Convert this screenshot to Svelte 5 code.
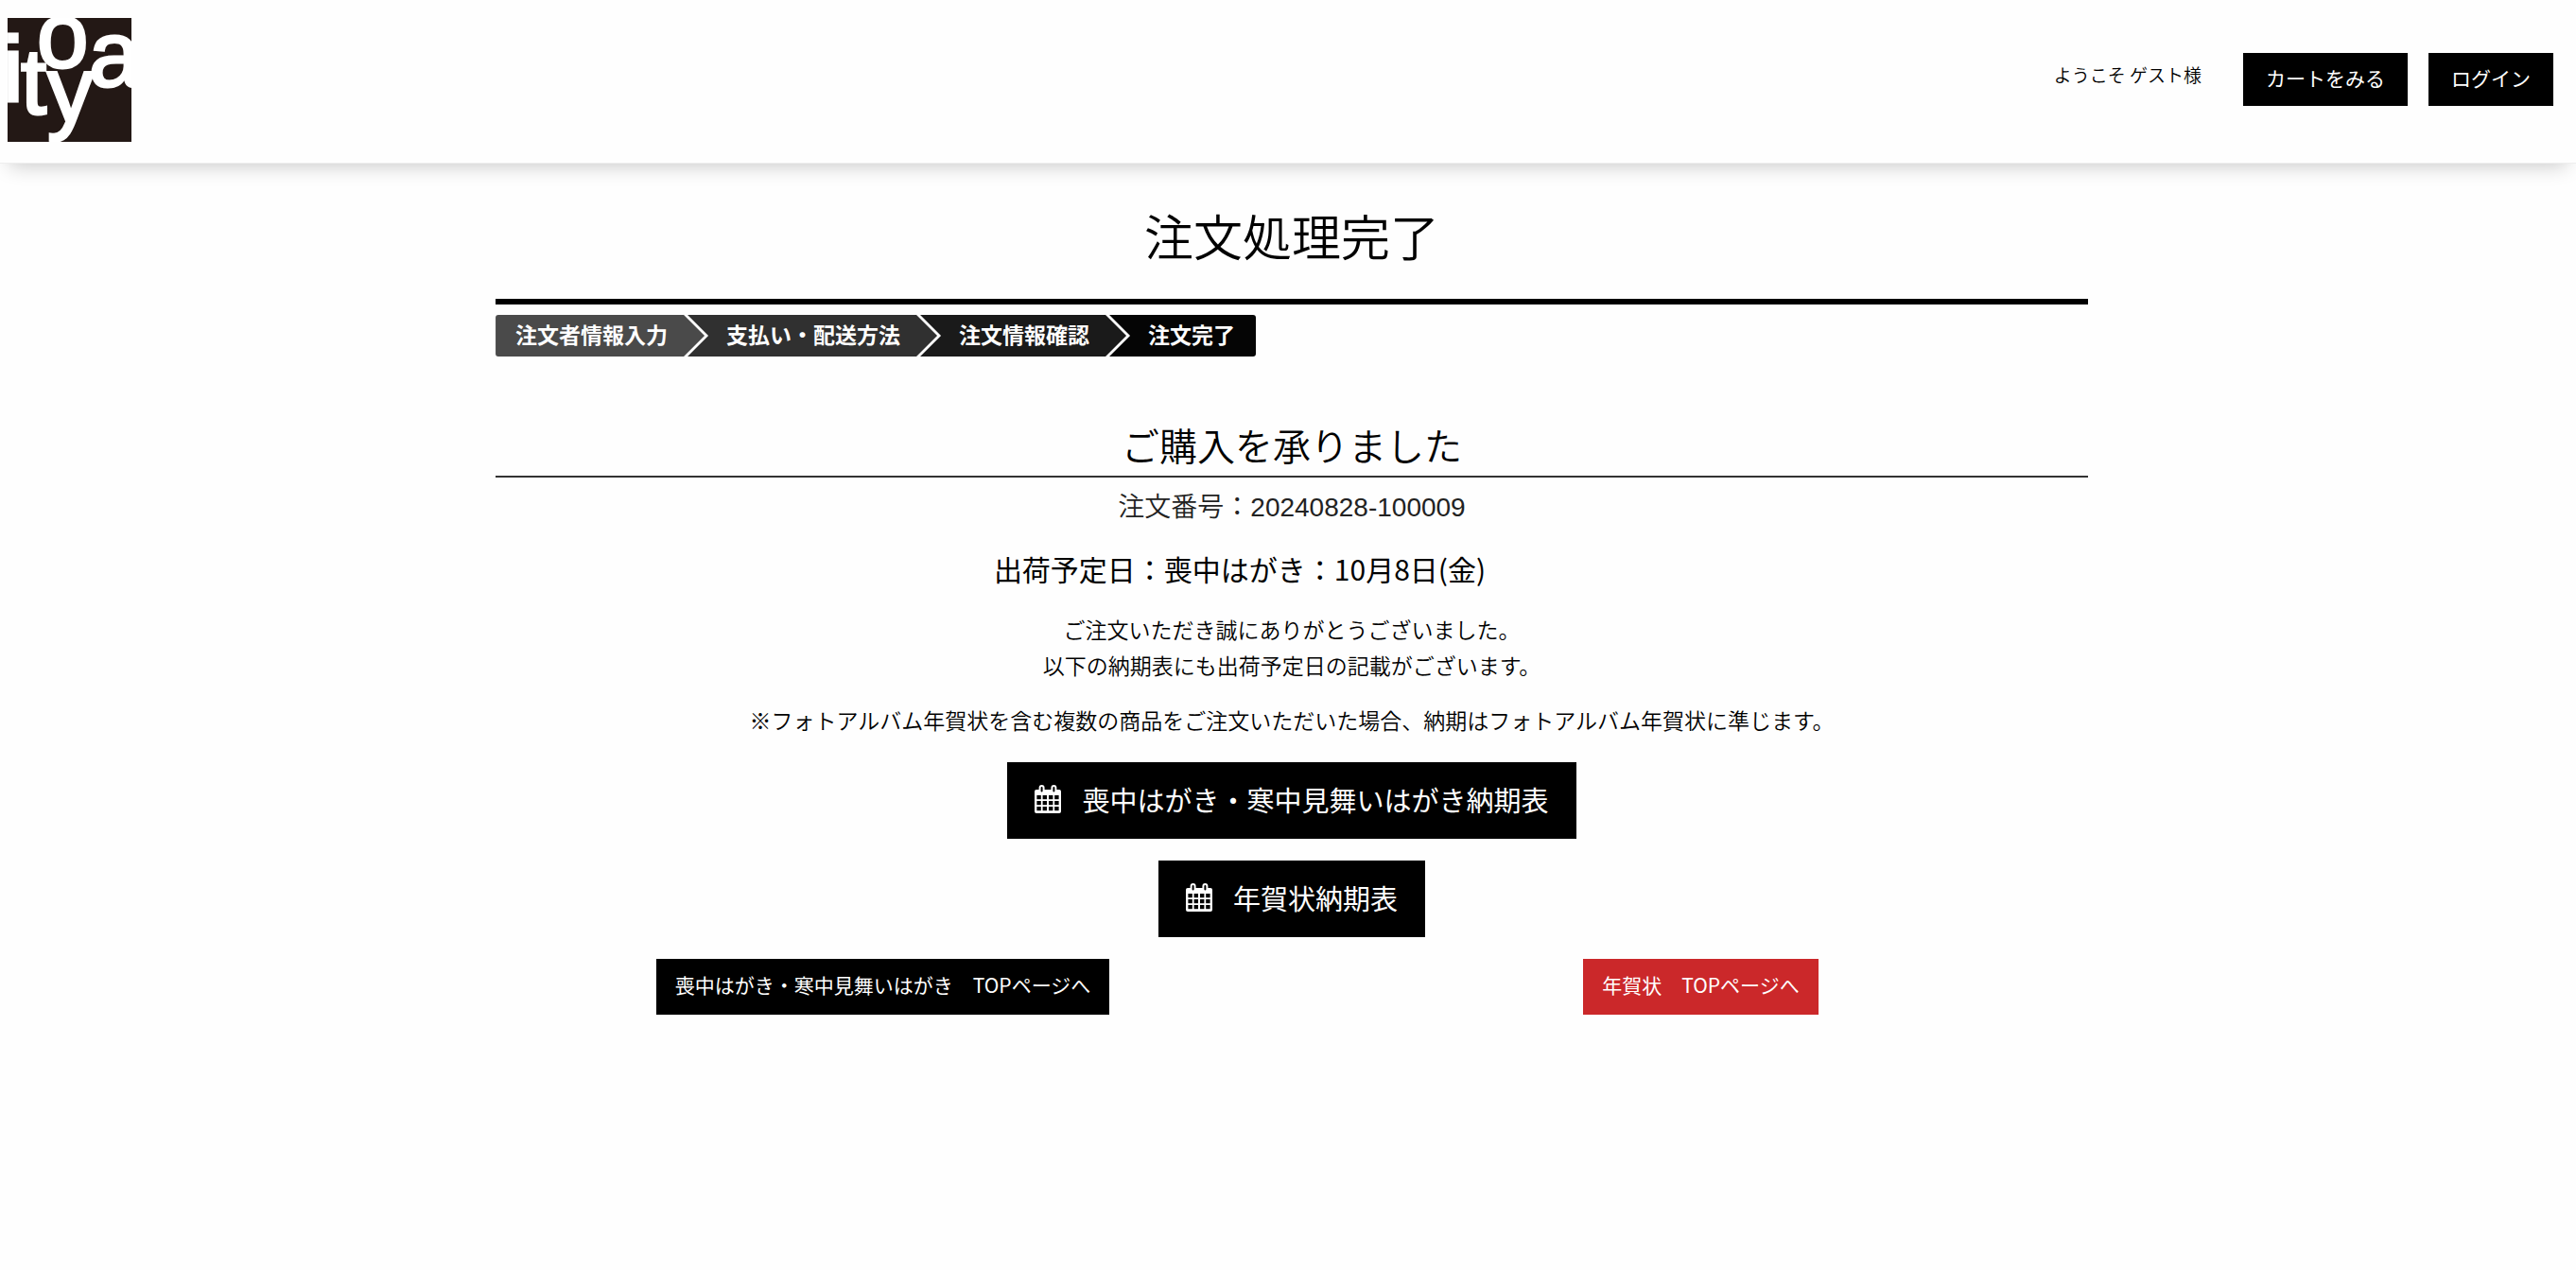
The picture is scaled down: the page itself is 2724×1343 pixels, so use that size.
<script lang="ts">
	const steps = ['注文者情報入力', '支払い・配送方法', '注文情報確認', '注文完了'];

	const schedules = [
		{ label: '喪中はがき・寒中見舞いはがき納期表', href: '#mochu-schedule' },
		{ label: '年賀状納期表', href: '#nenga-schedule' }
	];

	const orderNumber = '20240828-100009';
	const shipDate = '10月8日(金)';
</script>

<header class="site-header">
	<a class="logo" href="#top" aria-label="itoya">
		<svg viewBox="0 0 131 131" aria-hidden="true">
			<rect width="131" height="131" fill="#231815" />
			<g class="logo__letters">
				<text x="-5" y="88">i</text>
				<text x="14" y="101">t</text>
				<text x="31" y="52">o</text>
				<text x="42" y="110">y</text>
				<text x="86" y="72">a</text>
			</g>
		</svg>
	</a>
	<nav class="user-nav">
		<span class="welcome">ようこそ ゲスト様</span>
		<a class="btn btn--nav" href="#cart">カートをみる</a>
		<a class="btn btn--nav" href="#login">ログイン</a>
	</nav>
</header>

<div class="page">
	<main>
		<h1>注文処理完了</h1>

		<ol class="steps">
			{#each steps as step}
				<li>{step}</li>
			{/each}
		</ol>

		<section class="complete">
			<h2>ご購入を承りました</h2>
			<p class="order-number">注文番号：{orderNumber}</p>
			<p class="ship-date">出荷予定日：喪中はがき：{shipDate}</p>
			<p class="note">
				ご注文いただき誠にありがとうございました。<br />以下の納期表にも出荷予定日の記載がございます。
			</p>
			<p class="note">
				※フォトアルバム年賀状を含む複数の商品をご注文いただいた場合、納期はフォトアルバム年賀状に準じます。
			</p>

			<div class="schedules">
				{#each schedules as schedule}
					<a class="btn btn--large" href={schedule.href}>
						<svg class="icon" viewBox="0 0 28 30" aria-hidden="true">
							<rect x="0" y="5" width="28" height="25" rx="2" fill="currentColor" />
							<g fill="#000">
								{#each [11, 17, 23] as y}
									{#each [2.4, 8.6, 15, 21.2] as x}
										<rect {x} {y} width="4.4" height="4.2" />
									{/each}
								{/each}
							</g>
							<g fill="#000" stroke="currentColor" stroke-width="2">
								<rect x="5.600" y="1" width="4" height="7.400" rx="2" />
								<rect x="18.400" y="1" width="4" height="7.400" rx="2" />
							</g>
						</svg>
						{schedule.label}
					</a>
				{/each}
			</div>

			<div class="top-links">
				<a class="btn btn--small" href="#mochu-top">喪中はがき・寒中見舞いはがき　TOPページへ</a>
				<a class="btn btn--small btn--red" href="#nenga-top">年賀状　TOPページへ</a>
			</div>
		</section>
	</main>
</div>

<style>
	:global(body) {
		background: #fefefe;
		color: #000;
		font-family: 'Noto Sans CJK JP', sans-serif;
	}

	h1,
	h2,
	p,
	ol {
		margin: 0;
		padding: 0;
	}

	.site-header {
		display: flex;
		justify-content: space-between;
		align-items: flex-start;
		box-sizing: border-box;
		height: 173px;
		padding: 19px 24px 0 8px;
		border-bottom: 1px solid #eee;
		background: #fefefe;
		box-shadow: 0 12px 20px -10px rgba(0, 0, 0, 0.22);
	}

	.logo svg {
		display: block;
		width: 131px;
		height: 131px;
	}

	.logo__letters {
		fill: #fff;
		stroke: #fff;
		stroke-width: 3px;
		font-family: 'Liberation Sans', Arial, sans-serif;
		font-size: 98px;
	}

	.user-nav {
		display: flex;
		align-items: flex-start;
		gap: 22px;
		padding-top: 37px;
	}

	.welcome {
		margin-right: 22px;
		font-size: 19px;
		font-weight: 350;
		line-height: 46px;
	}

	.btn {
		display: inline-flex;
		align-items: center;
		background: #000;
		color: #fff;
		text-decoration: none;
		white-space: nowrap;
	}

	.btn--nav {
		padding: 0 24px 3px;
		font-size: 21px;
		line-height: 53px;
	}

	.btn--large {
		gap: 22px;
		padding: 0 29px 3px;
		font-size: 29px;
		line-height: 78px;
	}

	.btn--small {
		padding: 0 20px 4px;
		font-size: 21px;
		line-height: 55px;
	}

	.btn--red {
		background: #cb282a;
	}

	.icon {
		width: 28px;
		height: 30px;
	}

	.page {
		padding: 37px 0 0 8px;
	}

	main {
		width: 62%;
		margin: 0 auto;
	}

	h1 {
		padding-bottom: 28px;
		border-bottom: 6px solid #000;
		font-size: 52px;
		font-weight: 350;
		line-height: 78px;
		text-align: center;
	}

	.steps {
		display: flex;
		margin-top: 11px;
		list-style: none;
		color: #fff;
		font-size: 23px;
		font-weight: 700;
		line-height: 41px;
	}

	.steps li {
		margin-left: -18px;
		padding: 0 39px 3px 41px;
		background: #303030;
		clip-path: polygon(0 0, calc(100% - 22px) 0, 100% 50%, calc(100% - 22px) 100%, 0 100%, 22px 50%);
	}

	.steps li:first-child {
		margin-left: 0;
		padding-left: 21px;
		border-radius: 3px 0 0 3px;
		background: #4a4a4a;
		clip-path: polygon(0 0, calc(100% - 22px) 0, 100% 50%, calc(100% - 22px) 100%, 0 100%);
	}

	.steps li:nth-child(3) {
		background: #1a1a1a;
	}

	.steps li:last-child {
		padding-right: 22px;
		border-radius: 0 3px 3px 0;
		background: #050505;
		clip-path: polygon(0 0, 100% 0, 100% 100%, 0 100%, 22px 50%);
	}

	.complete {
		margin-top: 63px;
		text-align: center;
	}

	h2 {
		padding-bottom: 3px;
		border-bottom: 2px solid #333;
		font-size: 40px;
		font-weight: 350;
		line-height: 60px;
	}

	.order-number {
		margin-top: 10px;
		font-family: 'Liberation Sans', 'Noto Sans CJK JP', sans-serif;
		font-size: 28px;
		font-weight: 350;
		line-height: 44px;
		color: #222;
	}

	.ship-date {
		margin: 20px 0 23px;
		padding-right: 110px;
		font-size: 30px;
		line-height: 44px;
	}

	.note {
		margin-bottom: 20px;
		font-size: 23px;
		font-weight: 350;
		line-height: 38px;
	}

	.schedules {
		display: flex;
		flex-direction: column;
		align-items: center;
		gap: 23px;
		margin-top: 26px;
	}

	.top-links {
		display: grid;
		grid-template-columns: 1fr 1fr;
		justify-items: center;
		margin: 23px -23px 0;
	}
</style>
